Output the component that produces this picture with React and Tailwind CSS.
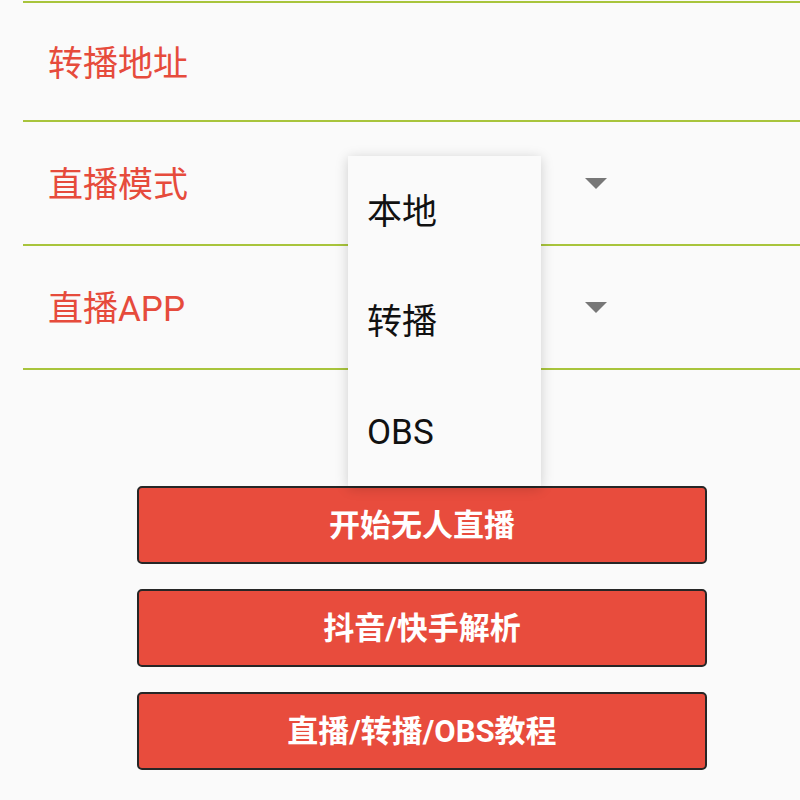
import React from "react";

const rows = [
  { label: "转播地址", spinner: false, h: "h-[119px]" },
  { label: "直播模式", spinner: true, h: "h-[124px]" },
  { label: "直播APP", spinner: true, h: "h-[124px]" },
];

const options = ["本地", "转播", "OBS"];

const buttons = ["开始无人直播", "抖音/快手解析", "直播/转播/OBS教程"];

export default function App() {
  return (
    <div
      className="relative w-[800px] h-[800px] overflow-hidden bg-[#fafafa]"
      style={{ fontFamily: 'Roboto, "Noto Sans CJK SC", sans-serif' }}
    >
      {/* form rows */}
      <div className="ml-[23px] mt-px border-t-2 border-[#a8c43c]">
        {rows.map((r) => (
          <div
            key={r.label}
            className={`flex items-center ${r.h} border-b-2 border-[#a8c43c]`}
          >
            <span className="pl-[25px] pt-[5px] text-[35px] leading-none text-[#e64b3c]">
              {r.label}
            </span>
            {r.spinner && (
              <div className="ml-auto mr-[193px] w-0 h-0 border-l-[11px] border-r-[11px] border-t-[11px] border-l-transparent border-r-transparent border-t-[#777777]" />
            )}
          </div>
        ))}
      </div>

      {/* buttons */}
      <div className="ml-[137px] mt-[116px] w-[570px] flex flex-col gap-[25px]">
        {buttons.map((b) => (
          <button
            key={b}
            className="h-[78px] pt-[3px] rounded-[5px] border-2 border-[#262626] bg-[#e84c3d] text-white text-[31px] font-bold"
          >
            {b}
          </button>
        ))}
      </div>

      {/* open dropdown menu */}
      <div className="absolute left-[348px] top-[156px] w-[193px] bg-[#fafafa] shadow-[0_2px_12px_rgba(0,0,0,0.18)]">
        {options.map((o) => (
          <div
            key={o}
            className="h-[110px] flex items-center pl-[19px] pt-[3px] text-[35px] leading-none text-[#111111]"
          >
            {o}
          </div>
        ))}
      </div>
    </div>
  );
}
